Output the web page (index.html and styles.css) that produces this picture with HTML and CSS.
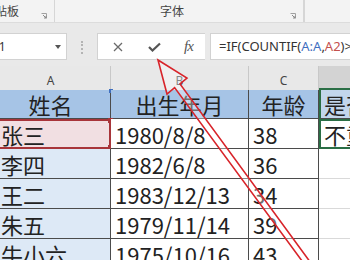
FILE: index.html
```
<!DOCTYPE html>
<html>
	<head>
		<meta charset="utf-8" />
		<title>表格</title>
		<link rel="stylesheet" href="styles.css">
	</head>
	<body>
		<div id="ribbon">
			<div class="group group-clip">
				<span class="group-label clip-label">剪贴板</span>
				<span class="launcher"><svg width="6" height="6" viewBox="0 0 6 6"><path d="M0.5 0.5 H5.5 V5.5" fill="none" stroke="#a0a0a0" stroke-width="1"/><path d="M2 2 L5 5 M3 5 H5 V3" fill="none" stroke="#8a8a8a" stroke-width="1"/></svg></span>
			</div>
			<div class="group group-font">
				<span class="group-label font-label">字体</span>
				<span class="launcher"><svg width="6" height="6" viewBox="0 0 6 6"><path d="M0.5 0.5 H5.5 V5.5" fill="none" stroke="#a0a0a0" stroke-width="1"/><path d="M2 2 L5 5 M3 5 H5 V3" fill="none" stroke="#8a8a8a" stroke-width="1"/></svg></span>
			</div>
			<div class="group"></div>
		</div>

		<div id="formula-bar">
			<div class="name-box">
				<span class="name-text">A1</span>
				<span class="drop"></span>
			</div>
			<div class="grip"></div>
			<div class="fx-box">
				<svg class="btn" width="10" height="10" viewBox="0 0 10 10"><path d="M1 1 L9 9 M9 1 L1 9" stroke="#6b6b6b" stroke-width="1.3"/></svg>
				<svg class="btn" width="13" height="10" viewBox="0 0 13 10"><path d="M1 5 L4.5 8.5 L12 1.5" fill="none" stroke="#555" stroke-width="2.2"/></svg>
				<span class="fx">fx</span>
			</div>
			<div class="formula">=IF(COUNTIF(<span class="ref-a">A:A</span>,<span class="ref-b">A2</span>)&gt;1,"重复","不重复")</div>
		</div>

		<div id="sheet">
			<div class="col-head">A</div>
			<div class="col-head">B</div>
			<div class="col-head">C</div>
			<div class="col-head active">D</div>

			<div class="cell title col-a first">姓名</div>
			<div class="cell title">出生年月</div>
			<div class="cell title">年龄</div>
			<div class="cell title col-d left">是否重复</div>

			<div class="cell col-a picked">张三</div>
			<div class="cell">1980/8/8</div>
			<div class="cell">38</div>
			<div class="cell col-d current">不重复</div>

			<div class="cell col-a ref">李四</div>
			<div class="cell">1982/6/8</div>
			<div class="cell">36</div>
			<div class="cell col-d blank"></div>

			<div class="cell col-a ref">王二</div>
			<div class="cell">1983/12/13</div>
			<div class="cell">34</div>
			<div class="cell col-d blank"></div>

			<div class="cell col-a ref">朱五</div>
			<div class="cell">1979/11/14</div>
			<div class="cell">39</div>
			<div class="cell col-d blank"></div>

			<div class="cell col-a ref">牛小六</div>
			<div class="cell">1975/10/16</div>
			<div class="cell">43</div>
			<div class="cell col-d blank"></div>
		</div>

		<svg id="arrow" width="350" height="260" viewBox="0 0 350 260">
			<polygon points="158,60 187,78 180,84 320.4,276 315.6,279.4 174.6,87.6 167,94" fill="rgba(255,255,255,0.35)" stroke="#d8242a" stroke-width="1.6" stroke-linejoin="miter"/>
		</svg>
	</body>
</html>
```

FILE: styles.css
```
body {
	position: relative;
	margin: 0px;
	width: 350px;
	height: 260px;
	overflow: hidden;
	background-color: #ffffff;
	font-family: "Noto Sans CJK SC", "Noto Sans", sans-serif;
	color: #222222;
}

/* ribbon strip */

#ribbon {
	display: flex;
	height: 23px;
	background-color: #f3f3f3;
	border-bottom: 1px solid #dcdcdc;
	box-sizing: border-box;
}

.group {
	position: relative;
	display: flex;
	align-items: center;
	height: 22px;
	border-right: 1px solid #d6d6d6;
	box-sizing: border-box;
}

.group-clip {
	width: 55px;
}

.group-font {
	width: 249px;
}

.group-label {
	font-size: 12px;
	color: #444444;
	white-space: nowrap;
	line-height: 12px;
}

.clip-label {
	margin-left: -17px;
}

.font-label {
	margin-left: 105px;
}

.launcher {
	position: absolute;
	right: 7px;
	top: 12px;
	width: 6px;
	height: 6px;
	line-height: 0px;
}

/* formula bar */

#formula-bar {
	display: flex;
	align-items: flex-start;
	height: 43px;
	padding-top: 10px;
	box-sizing: border-box;
	background-color: #e9e9e9;
}

.name-box {
	display: flex;
	align-items: center;
	width: 97px;
	height: 27px;
	margin-left: -30px;
	padding-left: 20px;
	box-sizing: border-box;
	background-color: #ffffff;
	border: 1px solid #d2d2d2;
}

.name-text {
	font-family: "Noto Sans", sans-serif;
	font-size: 12px;
	color: #333333;
	flex: 1;
}

.drop {
	width: 0px;
	height: 0px;
	margin-right: 5px;
	border-left: 3px solid transparent;
	border-right: 3px solid transparent;
	border-top: 4px solid #555555;
}

.grip {
	width: 2px;
	height: 13px;
	margin-top: 8px;
	margin-left: 14px;
	margin-right: 14px;
	border-left: 2px dotted #b4b4b4;
	box-sizing: border-box;
}

.fx-box {
	display: flex;
	align-items: center;
	width: 108px;
	height: 27px;
	padding-left: 15px;
	box-sizing: border-box;
	background-color: #ffffff;
	border: 1px solid #d2d2d2;
	border-right: none;
}

.btn {
	display: block;
	margin-right: 25px;
}

.btn + .btn {
	margin-right: 23px;
}

.fx {
	font-family: "Liberation Serif", serif;
	font-style: italic;
	font-size: 15px;
	color: #555555;
	letter-spacing: -1px;
}

.formula {
	flex: 1;
	height: 27px;
	margin-left: 5px;
	padding-left: 8px;
	box-sizing: border-box;
	background-color: #ffffff;
	border: 1px solid #d2d2d2;
	border-right: none;
	font-family: "Noto Sans", "Noto Sans CJK SC", sans-serif;
	font-size: 13px;
	line-height: 25px;
	color: #333333;
	white-space: nowrap;
	overflow: hidden;
}

.ref-a {
	color: #3f6fc0;
}

.ref-b {
	color: #c4514d;
}

/* sheet grid */

#sheet {
	display: grid;
	grid-template-columns: 120px 138px 70px 80px;
	grid-template-rows: 24px 29px 30px 30px 30px 30px 30px;
	margin-left: -9px;
}

.col-head {
	display: flex;
	align-items: center;
	justify-content: center;
	padding-top: 6px;
	background-color: #e8e8e8;
	border-right: 1px solid #c8c8c8;
	box-sizing: border-box;
	font-family: "Noto Sans", sans-serif;
	font-size: 12px;
	line-height: 14px;
	color: #444444;
}

.col-head.active {
	background-color: #d3d3d3;
	border-bottom: 2px solid #2a6e45;
}

.cell {
	position: relative;
	display: flex;
	align-items: center;
	padding-left: 4px;
	box-sizing: border-box;
	border-right: 1px solid #4b4b4b;
	border-bottom: 1px solid #4b4b4b;
	font-size: 22px;
	white-space: nowrap;
	overflow: hidden;
	background-color: #ffffff;
}

.cell.col-a {
	padding-left: 10px;
}

.cell.title {
	justify-content: center;
	padding-left: 0px;
	background-color: #a6c4e6;
}

.cell.title.col-d {
	justify-content: flex-start;
	padding-left: 3px;
	background-color: #c2d6ec;
}

.cell.first {
	overflow: visible;
}

.cell.first::after {
	content: "";
	position: absolute;
	right: -3px;
	top: -1px;
	width: 4px;
	height: 4px;
	background-color: #3f6fc0;
}

.cell.ref {
	background-color: #dde9f6;
}

.cell.picked {
	overflow: visible;
	background-color: #f1dfe2;
	border: 2px solid #a8353a;
	border-left: none;
}

.cell.picked::before,
.cell.picked::after {
	content: "";
	position: absolute;
	right: -4px;
	width: 5px;
	height: 5px;
	background-color: #a8353a;
}

.cell.picked::before {
	top: -3px;
}

.cell.picked::after {
	bottom: -3px;
}

.cell.col-d {
	border-right: none;
}

.cell.left {
	border-left: 2px solid #2a6e45;
}

.cell.current {
	padding-left: 3px;
	border: 2px solid #2a6e45;
	border-right: none;
}

.cell.blank {
	border-bottom: 1px solid #d9d9d9;
}

/* call-out arrow */

#arrow {
	position: absolute;
	left: 0px;
	top: 0px;
	pointer-events: none;
}
```
